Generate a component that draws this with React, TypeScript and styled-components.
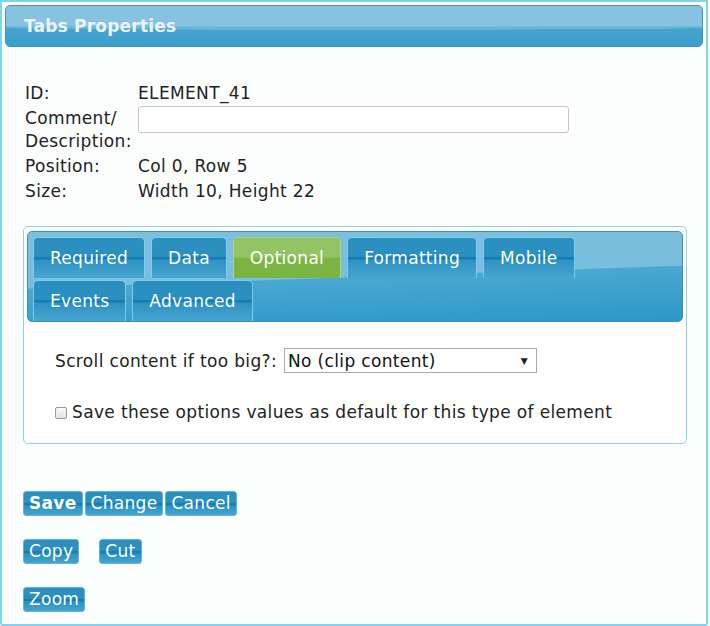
import React, {FC} from 'react';
import styled, {createGlobalStyle, css} from 'styled-components';

const GlobalStyle = createGlobalStyle`
  html, body {
    margin: 0;
    padding: 0;
    background: #ffffff;
  }
  body {
    font-family: "DejaVu Sans", Verdana, sans-serif;
    color: #222;
  }
`;

//region Styled
const Frame = styled.div`
  box-sizing: border-box;
  width: 708px;
  height: 626px;
  border: 2px solid #84d2f1;
  border-radius: 0 0 3px 3px;
  background: #fcfefe;
  padding: 3px;
  font-size: 17px;
  letter-spacing: 0.35px;
`;

const Header = styled.div`
  box-sizing: border-box;
  height: 42px;
  border: 1px solid #3d94c4;
  border-radius: 5px;
  background:
    radial-gradient(ellipse 140% 60% at 50% 0%, rgba(255,255,255,0.18) 0%, rgba(255,255,255,0.18) 99%, transparent 100%),
    linear-gradient(#6db6d9 0%, #6db6d9 50%, #45a5d0 52%, #3c9fcb 100%);
  color: #eaf5fb;
  font-weight: bold;
  font-size: 17px;
  letter-spacing: 0.2px;
  display: flex;
  align-items: center;
  padding-left: 18px;
`;

const Info = styled.div`
  display: grid;
  grid-template-columns: 113px 1fr;
  row-gap: 2px;
  padding: 35px 0 0 20px;
  line-height: 23px;
`;

const Label = styled.div`
  color: #222;
`;

const Value = styled.div`
  color: #222;
`;

const TextInput = styled.input`
  box-sizing: border-box;
  width: 431px;
  height: 27px;
  margin-top: -1px;
  border: 1px solid #c8c8c8;
  border-radius: 3px;
  background: #fff;
`;

const TabsBox = styled.div`
  box-sizing: border-box;
  margin: 23px 0 0 18px;
  width: 664px;
  height: 218px;
  border: 1px solid #8cd2ef;
  border-radius: 5px;
  background: #ffffff;
  padding: 4px 3px;
`;

const TabBar = styled.div`
  box-sizing: border-box;
  height: 91px;
  border: 1px solid #3a90c2;
  border-radius: 5px;
  background:
    linear-gradient(178deg, #7cc0de 0%, #79bedd 50%, #4aa8d0 51%, #2c98c8 100%);
  padding: 5px 12px 0 5px;
  display: flex;
  flex-wrap: wrap;
  align-content: flex-start;
  column-gap: 6px;
  row-gap: 2px;
`;

const Tab = styled.div<{active?: boolean}>`
  box-sizing: border-box;
  height: 41px;
  padding: 0 16px;
  display: flex;
  align-items: center;
  color: #fff;
  font-size: 17px;
  letter-spacing: 0.3px;
  border: 1px solid #7fcbee;
  border-bottom: none;
  border-radius: 5px 5px 0 0;
  background: linear-gradient(#2b8fc0 0%, #2b8fc0 46%, #0b76b0 50%, #2f92c3 56%, #47a6d0 100%);
  ${p => p.active && css`
    border-color: #a8d580;
    background: linear-gradient(#92c464 0%, #92c464 46%, #7cb442 52%, #7ab442 100%);
  `}
`;

const OptionRow = styled.div`
  display: flex;
  align-items: center;
  padding: 26px 0 0 28px;
`;

const Select = styled.div`
  box-sizing: border-box;
  width: 253px;
  height: 25px;
  margin-left: 7px;
  border: 1px solid #a9a9a9;
  background: #fff;
  display: flex;
  align-items: center;
  justify-content: space-between;
  padding: 0 8px 0 3px;
  color: #111;
`;

const Caret = styled.span`
  font-size: 9px;
  color: #222;
`;

const CheckRow = styled.label`
  display: flex;
  align-items: center;
  padding: 29px 0 0 28px;
  gap: 5px;
  color: #222;
`;

const Box = styled.span`
  box-sizing: border-box;
  width: 12px;
  height: 12px;
  border: 1px solid #9a9a9a;
  border-radius: 2px;
  background: linear-gradient(#fafafa, #e4e4e4);
  margin-top: 1px;
`;

const ButtonRow = styled.div<{gap?: number; top: number}>`
  display: flex;
  gap: ${p => p.gap ?? 2}px;
  padding: ${p => p.top}px 0 0 18px;
`;

const Button = styled.button<{bold?: boolean}>`
  box-sizing: border-box;
  height: 25px;
  padding: 0 5px;
  font-family: "DejaVu Sans", Verdana, sans-serif;
  font-size: 17px;
  letter-spacing: 0.3px;
  font-weight: ${p => (p.bold ? 'bold' : 'normal')};
  color: #fff;
  border: 1px solid #5cb5dd;
  border-radius: 3px;
  background: linear-gradient(#2b8fc0 0%, #2b8fc0 45%, #0d78b1 52%, #2f92c3 62%, #46a5cf 100%);
  cursor: pointer;
  line-height: 1;
`;
//endregion

const tabs = [
    {name: 'Required'},
    {name: 'Data'},
    {name: 'Optional', active: true},
    {name: 'Formatting'},
    {name: 'Mobile'},
    {name: 'Events'},
    {name: 'Advanced'},
];

const App: FC = () => {
    return (
        <>
            <GlobalStyle/>
            <Frame>
                <Header>Tabs Properties</Header>
                <Info>
                    <Label>ID:</Label>
                    <Value>ELEMENT_41</Value>
                    <Label>Comment/<br/>Description:</Label>
                    <Value><TextInput type="text"/></Value>
                    <Label>Position:</Label>
                    <Value>Col 0, Row 5</Value>
                    <Label>Size:</Label>
                    <Value>Width 10, Height 22</Value>
                </Info>
                <TabsBox>
                    <TabBar>
                        {tabs.map(tab => (
                            <Tab key={tab.name} active={tab.active}>{tab.name}</Tab>
                        ))}
                    </TabBar>
                    <OptionRow>
                        Scroll content if too big?:
                        <Select>
                            <span>No (clip content)</span>
                            <Caret>▼</Caret>
                        </Select>
                    </OptionRow>
                    <CheckRow>
                        <Box/>
                        Save these options values as default for this type of element
                    </CheckRow>
                </TabsBox>
                <ButtonRow top={47}>
                    <Button bold>Save</Button>
                    <Button>Change</Button>
                    <Button>Cancel</Button>
                </ButtonRow>
                <ButtonRow top={23} gap={20}>
                    <Button>Copy</Button>
                    <Button>Cut</Button>
                </ButtonRow>
                <ButtonRow top={23}>
                    <Button>Zoom</Button>
                </ButtonRow>
            </Frame>
        </>
    );
};

export default App;
